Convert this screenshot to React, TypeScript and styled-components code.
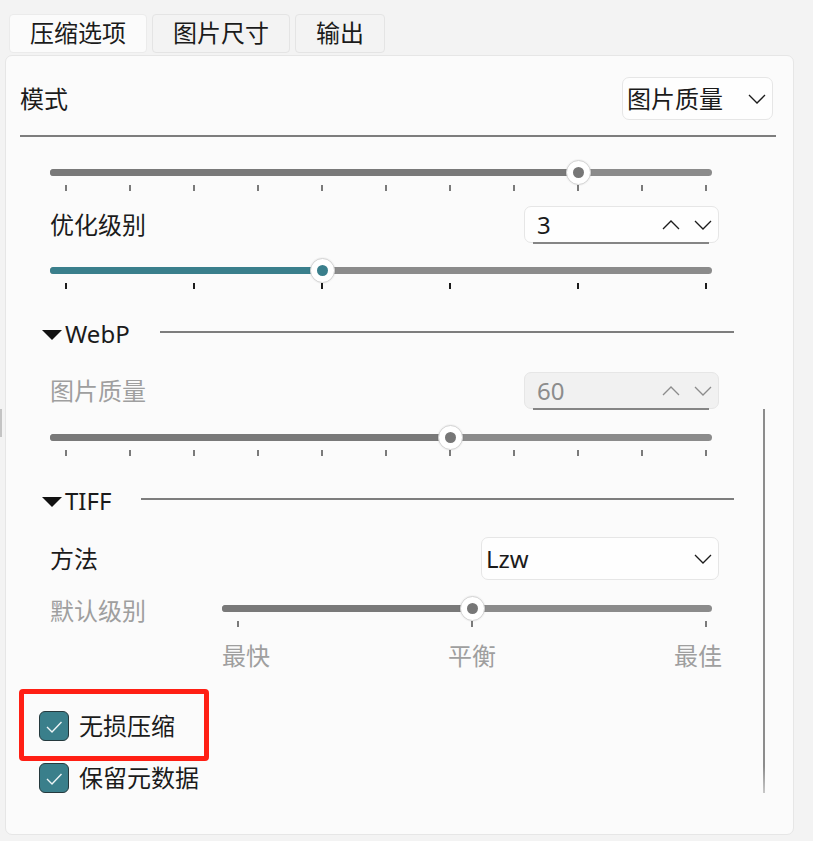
import React from "react";
import styled, { createGlobalStyle } from "styled-components";

const GlobalStyle = createGlobalStyle`
  html, body { margin: 0; padding: 0; background: #f3f3f3; }
  body {
    font-family: "Noto Sans", "Noto Sans CJK SC", sans-serif;
    color: #1b1b1b;
    font-size: 24px;
  }
  * { box-sizing: border-box; }
`;

const Page = styled.div`
  position: relative;
  width: 813px;
  height: 841px;
  padding: 14px 19px 0 5px;
`;

const SplitGrip = styled.div`
  position: absolute;
  left: 0;
  top: 409px;
  width: 2px;
  height: 28px;
  background: #c4c4c4;
`;

const TabBar = styled.div`
  display: flex;
  gap: 5px;
  margin-left: 4px;
  margin-bottom: 2px;
`;

const Tab = styled.div<{ $active?: boolean }>`
  height: 39px;
  padding: 0 20px;
  line-height: 36px;
  font-size: 24px;
  border: 1px solid ${(p) => (p.$active ? "#ebebeb" : "#e4e4e4")};
  border-radius: 4px;
  background: ${(p) => (p.$active ? "#fbfbfb" : "#f3f3f3")};
  color: #1b1b1b;
`;

const Panel = styled.div`
  position: relative;
  height: 780px;
  border: 1px solid #e6e6e6;
  border-radius: 7px;
  background: #fbfbfb;
  padding: 21px 20px 0 14px;
`;

const ModeRow = styled.div`
  display: flex;
  align-items: center;
  justify-content: space-between;
  height: 43px;
`;

const Label = styled.span<{ $disabled?: boolean }>`
  font-size: 24px;
  line-height: 30px;
  color: ${(p) => (p.$disabled ? "#9f9f9f" : "#1b1b1b")};
  white-space: nowrap;
`;

const Separator = styled.div`
  margin-top: 15px;
  margin-right: -3px;
  height: 2px;
  background: #7d7d7d;
`;

const Column = styled.div`
  margin-left: 30px;
  width: 669px;
`;

const Row = styled.div<{ $mt: number; $h: number }>`
  display: flex;
  align-items: center;
  justify-content: space-between;
  margin-top: ${(p) => p.$mt}px;
  height: ${(p) => p.$h}px;
`;

const Select = styled.div<{ $w: number }>`
  display: flex;
  align-items: center;
  justify-content: space-between;
  width: ${(p) => p.$w}px;
  height: 43px;
  padding: 0 6px 0 4px;
  background: #fefefe;
  border: 1px solid #e6e6e6;
  border-radius: 7px;
  font-size: 24px;
  line-height: 30px;
  color: #1b1b1b;
`;

const Spin = styled.div<{ $disabled?: boolean }>`
  position: relative;
  display: flex;
  align-items: center;
  justify-content: space-between;
  width: 195px;
  height: 37px;
  padding: 0 6px 0 12px;
  background: ${(p) => (p.$disabled ? "#f1f1f1" : "#fefefe")};
  border: 1px solid #e6e6e6;
  border-radius: 7px;
  font-size: 24px;
  line-height: 30px;
  color: ${(p) => (p.$disabled ? "#8c8c8c" : "#1b1b1b")};
  &::after {
    content: "";
    position: absolute;
    left: 8px;
    right: 9px;
    bottom: -2px;
    height: 2px;
    background: #858585;
  }
`;

const SpinArrows = styled.div`
  display: flex;
  align-items: center;
  gap: 14px;
`;

const Chevron = ({ up, color = "#1b1b1b" }: { up?: boolean; color?: string }) => (
  <svg width="18" height="10" viewBox="0 0 18 10" fill="none">
    <path
      d={up ? "M1 9 L9 1 L17 9" : "M1 1 L9 9 L17 1"}
      stroke={color}
      strokeWidth="1.3"
    />
  </svg>
);

/* ---------- Slider ---------- */

const SliderWrap = styled.div<{ $mt: number; $mr: number }>`
  margin-top: ${(p) => p.$mt}px;
  margin-right: ${(p) => p.$mr}px;
`;

const TrackArea = styled.div`
  position: relative;
  height: 25px;
`;

const Track = styled.div`
  position: absolute;
  left: 0;
  right: 0;
  top: 9px;
  height: 7px;
  border-radius: 4px;
  background: #8b8b8b;
  overflow: hidden;
`;

const Fill = styled.div<{ $accent?: boolean }>`
  position: absolute;
  left: 0;
  top: 0;
  bottom: 0;
  background: ${(p) => (p.$accent ? "#3a7f8c" : "#797979")};
`;

const Thumb = styled.div<{ $accent?: boolean }>`
  position: absolute;
  top: 0;
  width: 25px;
  height: 25px;
  margin-left: -12.5px;
  border-radius: 50%;
  background: #ffffff;
  border: 1px solid #d3d3d3;
  box-shadow: 0 0 0 1px rgba(0, 0, 0, 0.03);
  display: flex;
  align-items: center;
  justify-content: center;
  &::after {
    content: "";
    width: 11px;
    height: 11px;
    border-radius: 50%;
    background: ${(p) => (p.$accent ? "#3a7f8c" : "#777777")};
  }
`;

const Ticks = styled.div`
  display: flex;
  justify-content: space-between;
  padding: 0 5px 0 15px;
  height: 6px;
`;

const Tick = styled.div<{ $dark?: boolean }>`
  width: 2px;
  height: 6px;
  background: ${(p) => (p.$dark ? "#1c1c1c" : "#7a7a7a")};
`;

type SliderProps = {
  value: number;
  ticks: number;
  accent?: boolean;
  darkTicks?: boolean;
  mt: number;
  mr: number;
};

const Slider = ({ value, ticks, accent, darkTicks, mt, mr }: SliderProps) => {
  const pos = `calc(16px + ${value} * (100% - 22px))`;
  return (
    <SliderWrap $mt={mt} $mr={mr}>
      <TrackArea>
        <Track>
          <Fill $accent={accent} style={{ width: pos }} />
        </Track>
        <Thumb $accent={accent} style={{ left: pos }} />
      </TrackArea>
      <Ticks>
        {Array.from({ length: ticks }).map((_, i) => (
          <Tick key={i} $dark={darkTicks} />
        ))}
      </Ticks>
    </SliderWrap>
  );
};

/* ---------- Section header ---------- */

const Header = styled.div<{ $mt: number }>`
  display: flex;
  align-items: center;
  height: 40px;
  margin-top: ${(p) => p.$mt}px;
  margin-left: -8px;
  margin-right: -15px;
`;

const Triangle = styled.div`
  width: 0;
  height: 0;
  border-left: 10px solid transparent;
  border-right: 10px solid transparent;
  border-top: 10px solid #111111;
  margin-top: 2px;
`;

const HeaderText = styled.span`
  margin-left: 3px;
  font-size: 24px;
  line-height: 30px;
  color: #1b1b1b;
`;

const HeaderLine = styled.div`
  flex: 1;
  height: 2px;
  margin-left: 30px;
  margin-bottom: 4px;
  background: #7d7d7d;
`;

/* ---------- Level row ---------- */

const LevelRow = styled.div`
  display: flex;
  align-items: flex-start;
  margin-top: 16px;
`;

const LevelLabel = styled(Label)`
  width: 172px;
  flex: none;
`;

const LevelCol = styled.div`
  flex: 1;
`;

const ScaleLabels = styled.div`
  display: flex;
  justify-content: space-between;
  margin-top: 13px;
  margin-right: -3px;
  font-size: 24px;
  line-height: 32px;
  color: #9f9f9f;
`;

/* ---------- Checkboxes ---------- */

const CheckList = styled.div`
  display: flex;
  flex-direction: column;
  gap: 12px;
  margin-top: 34px;
  margin-left: 19px;
`;

const CheckRow = styled.div`
  position: relative;
  display: flex;
  align-items: center;
  gap: 10px;
  height: 40px;
`;

const Box = styled.div`
  width: 30px;
  height: 30px;
  border-radius: 6px;
  background: #3a7f8b;
  border: 1.5px solid #25393d;
  display: flex;
  align-items: center;
  justify-content: center;
`;

const Highlight = styled.div`
  position: absolute;
  left: -20px;
  top: -17px;
  width: 190px;
  height: 72px;
  border: 5px solid #ff1f14;
  border-radius: 4px;
  pointer-events: none;
`;

const Scrollbar = styled.div`
  position: absolute;
  left: 757px;
  top: 353px;
  width: 2px;
  height: 384px;
  background: linear-gradient(to bottom, #8c8c8c 0%, #8c8c8c 93%, #c8c8c8 100%);
`;

const Check = () => (
  <Box>
    <svg width="27" height="27" viewBox="0 0 27 27" fill="none">
      <path d="M6 14 L11 19 L20.5 9" stroke="#eef5f6" strokeWidth="1.4" />
    </svg>
  </Box>
);

export default function App() {
  return (
    <>
      <GlobalStyle />
      <Page>
        <SplitGrip />
        <TabBar>
          <Tab $active>压缩选项</Tab>
          <Tab>图片尺寸</Tab>
          <Tab>输出</Tab>
        </TabBar>
        <Panel>
          <ModeRow>
            <Label>模式</Label>
            <Select $w={151}>
              <span>图片质量</span>
              <Chevron />
            </Select>
          </ModeRow>
          <Separator />

          <Column>
            <Slider value={0.8} ticks={11} mt={23} mr={7} />

            <Row $mt={15} $h={37}>
              <Label>优化级别</Label>
              <Spin>
                <span>3</span>
                <SpinArrows>
                  <Chevron up />
                  <Chevron />
                </SpinArrows>
              </Spin>
            </Row>

            <Slider value={0.4} ticks={6} accent darkTicks mt={15} mr={7} />

            <Header $mt={25}>
              <Triangle />
              <HeaderText>WebP</HeaderText>
              <HeaderLine />
            </Header>

            <Row $mt={18} $h={37}>
              <Label $disabled>图片质量</Label>
              <Spin $disabled>
                <span>60</span>
                <SpinArrows>
                  <Chevron up color="#8c8c8c" />
                  <Chevron color="#8c8c8c" />
                </SpinArrows>
              </Spin>
            </Row>

            <Slider value={0.6} ticks={11} mt={16} mr={7} />

            <Header $mt={25}>
              <Triangle />
              <HeaderText>TIFF</HeaderText>
              <HeaderLine />
            </Header>

            <Row $mt={16} $h={43}>
              <Label>方法</Label>
              <Select $w={238}>
                <span>Lzw</span>
                <Chevron />
              </Select>
            </Row>

            <LevelRow>
              <LevelLabel $disabled>默认级别</LevelLabel>
              <LevelCol>
                <Slider value={0.5} ticks={3} mt={0} mr={7} />
                <ScaleLabels>
                  <span>最快</span>
                  <span>平衡</span>
                  <span>最佳</span>
                </ScaleLabels>
              </LevelCol>
            </LevelRow>
          </Column>

          <CheckList>
            <CheckRow>
              <Check />
              <Label>无损压缩</Label>
              <Highlight />
            </CheckRow>
            <CheckRow>
              <Check />
              <Label>保留元数据</Label>
            </CheckRow>
          </CheckList>

          <Scrollbar />
        </Panel>
      </Page>
    </>
  );
}
